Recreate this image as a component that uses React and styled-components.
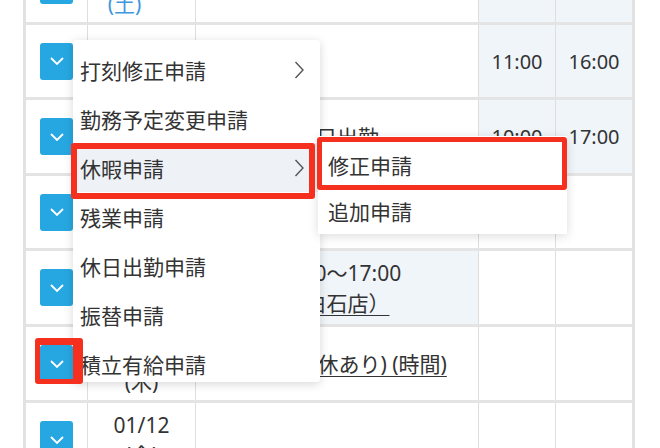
import React from 'react';
import styled, {createGlobalStyle} from 'styled-components';

const GlobalStyle = createGlobalStyle`
  html,
  body {
    margin: 0;
    padding: 0;
    background: #fff;
    overflow: hidden;
  }

  body {
    color: #333;
    font-family: "Noto Sans", "Noto Sans CJK JP", sans-serif;
  }
`;

const TONES = {
  plain: '#333',
  sat: '#3f97dc',
  sun: '#e85a66'
};

const Page = styled.div`
  background: #fff;
  height: 448px;
  overflow: hidden;
  width: 660px;
`;

const Table = styled.div`
  border-left: 3px solid #e2e2e2;
  border-right: 3px solid #e2e2e2;
  margin: -51px 0 0 23px;
  width: 606px;
`;

const Row = styled.div`
  background: #dedede;
  border-bottom: 3px solid #e4e4e4;
  column-gap: 1px;
  display: grid;
  grid-template-columns: 61px 107px 282px 76px 76px;
  height: ${({$h}) => $h}px;
`;

const Cell = styled.div`
  align-items: center;
  background: ${({$tint}) => ($tint ? '#f0f5fa' : '#fff')};
  display: flex;
  justify-content: center;
`;

const DateStack = styled.div`
  align-items: center;
  color: ${({$tone}) => TONES[$tone]};
  display: flex;
  flex-direction: column;
  font-size: 21px;
  line-height: 30px;
  transform: translate(${({$dx}) => $dx || 0}px, ${({$dy}) => $dy || 0}px);
`;

const BodyCell = styled(Cell)`
  flex-direction: column;
  font-size: 21px;
  line-height: 30px;
  text-align: center;
  white-space: nowrap;
`;

const Link = styled.span`
  text-decoration: underline;
  text-decoration-thickness: 1px;
  text-underline-offset: 4px;
`;

const TimeCell = styled(Cell)`
  font-size: 20px;
`;

const Anchor = styled.div`
  height: 37px;
  position: relative;
  width: 33px;
`;

const Toggle = styled.button`
  align-items: center;
  background: #27a7e1;
  border: 0;
  border-radius: 3px;
  display: flex;
  height: 37px;
  justify-content: center;
  padding: 0;
  width: 33px;
`;

const Mark = styled.span`
  border: 5px solid #f5301e;
  border-radius: 3px;
  border-width: ${({$w}) => $w || '5px'};
  inset: ${({$inset}) => $inset};
  pointer-events: none;
  position: absolute;
  z-index: 8;
`;

const Menu = styled.ul`
  background: #fff;
  border-radius: 3px;
  bottom: 0;
  box-shadow: 0 2px 10px rgba(0, 0, 0, 0.16);
  box-sizing: border-box;
  height: 342px;
  left: 100%;
  list-style: none;
  margin: 0;
  padding: 5px 0 0;
  position: absolute;
  width: 247px;
  z-index: 5;
`;

const MenuItem = styled.li`
  align-items: center;
  background: ${({$active}) => ($active ? '#eef1f6' : 'transparent')};
  box-sizing: border-box;
  display: flex;
  font-size: 21px;
  height: 49px;
  justify-content: space-between;
  padding: 0 16px 0 7px;
  position: relative;
  white-space: nowrap;
`;

const SubMenu = styled.ul`
  background: #fff;
  box-shadow: 0 2px 10px rgba(0, 0, 0, 0.14);
  box-sizing: border-box;
  left: calc(100% - 2px);
  list-style: none;
  margin: 0;
  padding: 6px 0 0;
  position: absolute;
  top: -7px;
  width: 249px;
  z-index: 6;
`;

const SubItem = styled.li`
  align-items: center;
  display: flex;
  height: 46px;
  padding-left: 10px;
  position: relative;
`;

const ChevronDown = () => (
  <svg width="14" height="8" viewBox="0 0 14 8">
    <polyline points="1,1 7,7 13,1" fill="none" stroke="#fff" strokeWidth="1.8" />
  </svg>
);

const ChevronRight = () => (
  <svg width="10" height="18" viewBox="0 0 10 18">
    <polyline points="1.5,1 9,9 1.5,17" fill="none" stroke="#555" strokeWidth="1.4" />
  </svg>
);

const LEAVE_ITEMS = ['修正申請', '追加申請'];

const RequestMenu = () => (
  <Menu>
    <MenuItem>
      打刻修正申請
      <ChevronRight />
    </MenuItem>
    <MenuItem>勤務予定変更申請</MenuItem>
    <MenuItem $active>
      休暇申請
      <ChevronRight />
      <Mark $inset="0 5px -7px -2px" $w="6px" />
      <SubMenu>
        {LEAVE_ITEMS.map((label, i) => (
          <SubItem key={label}>
            {label}
            {i === 0 && <Mark $inset="-5px 0 -2px -1px" />}
          </SubItem>
        ))}
      </SubMenu>
    </MenuItem>
    <MenuItem>残業申請</MenuItem>
    <MenuItem>休日出勤申請</MenuItem>
    <MenuItem>振替申請</MenuItem>
    <MenuItem>積立有給申請</MenuItem>
  </Menu>
);

const ROWS = [
  {h: 73, date: '01/06', day: '(土)', tone: 'sat', dx: -17, dy: 3, tintTime: true},
  {h: 72, date: '01/07', day: '(日)', tone: 'sun', dx: -17, dy: 2, start: '11:00', end: '16:00', tintTime: true},
  {h: 73, date: '01/08', day: '(月)', tone: 'sun', body: ['休日出勤'], start: '10:00', end: '17:00', tintTime: true},
  {h: 72, date: '01/09', day: '(火)'},
  {h: 73, date: '01/10', day: '(水)', body: ['10:00〜17:00'], link: '（白石店）', tintBody: true},
  {h: 73, date: '01/11', day: '(木)', dy: 3, link: '振替(半日休あり) (時間)', open: true},
  {h: 73, date: '01/12', day: '(金)'}
];

const App = () => (
  <Page>
    <GlobalStyle />
    <Table>
      {ROWS.map((row) => (
        <Row key={row.date} $h={row.h}>
          <Cell>
            <Anchor>
              <Toggle>
                <ChevronDown />
              </Toggle>
              {row.open && <Mark $inset="-7px -10px -2px -5px" $w="7px 10px 5px 5px" />}
              {row.open && <RequestMenu />}
            </Anchor>
          </Cell>
          <Cell>
            <DateStack $tone={row.tone || 'plain'} $dx={row.dx} $dy={row.dy}>
              <span>{row.date}</span>
              <span>{row.day}</span>
            </DateStack>
          </Cell>
          <BodyCell $tint={row.tintBody}>
            {(row.body || []).map((line) => (
              <span key={line}>{line}</span>
            ))}
            {row.link && <Link>{row.link}</Link>}
          </BodyCell>
          <TimeCell $tint={row.tintTime}>{row.start}</TimeCell>
          <TimeCell $tint={row.tintTime}>{row.end}</TimeCell>
        </Row>
      ))}
    </Table>
  </Page>
);

export default App;
